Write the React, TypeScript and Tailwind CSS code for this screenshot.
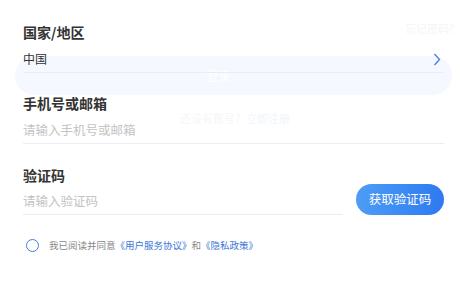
import React from "react";

export default function App() {
  return (
    <div
      className="relative w-[467px] h-[298px] bg-white overflow-hidden"
      style={{ fontFamily: '"Noto Sans CJK SC", "Noto Sans", sans-serif' }}
    >
      {/* fading page underneath */}
      <div className="absolute inset-0 pointer-events-none">
        <div className="absolute left-[15px] top-[56px] w-[437px] h-[39px] rounded-full bg-[#f5f9ff] flex items-center justify-center">
          <span className="text-[12px] text-white -ml-[30px]">登录</span>
        </div>
        <div className="absolute left-[405px] top-[20px] text-[11px] leading-[16px] text-[#f5f5f7]">忘记密码?</div>
        <div className="absolute left-[180px] top-[110px] text-[11px] leading-[16px] text-[#f6f6f8]">
          还没有账号？<span className="text-[#f1f5fd]">立即注册</span>
        </div>
      </div>

      <div className="relative flex flex-col px-[23px] pt-[24px]">
        <div className="text-[14px] leading-[16px] font-semibold text-[#333]">国家/地区</div>
        <div className="mt-[6px] h-[27px] flex items-center justify-between border-b border-[#e8eef8]">
          <span className="text-[12px] text-[#333]">中国</span>
          <svg width="8" height="13" viewBox="0 0 8 13" className="mr-[3px]">
            <path d="M1.5 1 L6.5 6.5 L1.5 12" fill="none" stroke="#3f7fe0" strokeWidth="1.3" />
          </svg>
        </div>

        <div className="mt-[22px] text-[14px] leading-[16px] font-semibold text-[#333]">手机号或邮箱</div>
        <div className="mt-[6px] h-[27px] flex items-center border-b border-[#e8eef8]">
          <span className="text-[12.5px] text-[#c4c4c4]">请输入手机号或邮箱</span>
        </div>

        <div className="mt-[23px] text-[14px] leading-[16px] font-semibold text-[#333]">验证码</div>
        <div className="mt-[1px] flex items-end gap-[13px]">
          <div className="flex-1 h-[27px] flex items-center border-b border-[#e8eef8]">
            <span className="text-[12.5px] text-[#c4c4c4]">请输入验证码</span>
          </div>
          <div className="w-[88px] h-[31px] rounded-full bg-gradient-to-r from-[#4d9df6] to-[#2e79f0] flex items-center justify-center">
            <span className="text-[12.5px] text-white">获取验证码</span>
          </div>
        </div>

        <div className="mt-[23px] flex items-center gap-[10px] ml-[3px]">
          <div className="w-[13px] h-[13px] rounded-full border-[1.5px] border-[#3f7fe0]" />
          <div className="text-[9.5px] text-[#888]">
            我已阅读并同意<span className="text-[#3a78d8]">《用户服务协议》</span>和<span className="text-[#3a78d8]">《隐私政策》</span>
          </div>
        </div>
      </div>
    </div>
  );
}
